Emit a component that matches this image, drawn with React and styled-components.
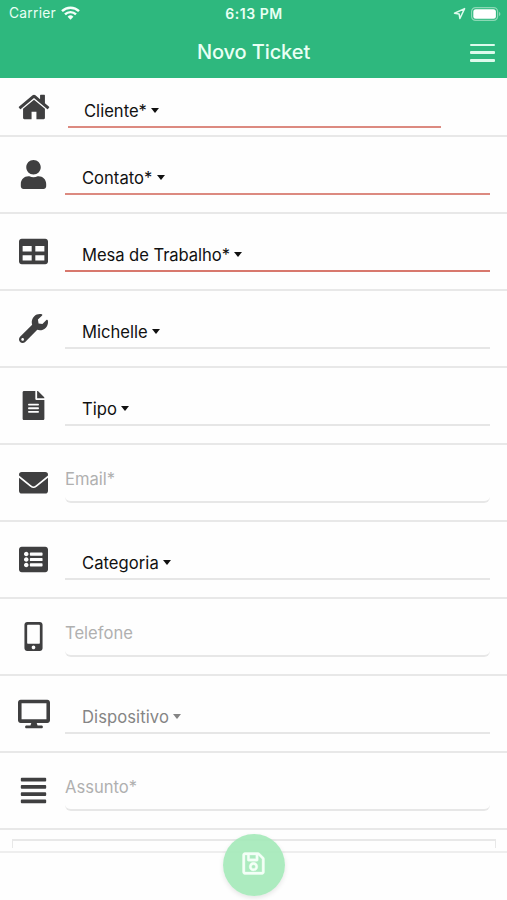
import React from 'react';
import styled, { createGlobalStyle } from 'styled-components';
import {
  FaUser, FaTable, FaWrench, FaFileAlt,
  FaListAlt, FaMobileAlt, FaDesktop, FaAlignJustify, FaRegSave,
} from 'react-icons/fa';

const GlobalStyle = createGlobalStyle`
  * { box-sizing: border-box; }
  body { margin: 0; background: #fefefe; }
`;

const Screen = styled.div`
  display: flex;
  flex-direction: column;
  width: 507px;
  height: 900px;
  overflow: hidden;
  background: #fefefe;
  font-family: Inter, "Liberation Sans", sans-serif;
  color: #111;
`;

const Header = styled.header`
  flex: none;
  height: 78px;
  background: #2eb87e;
  color: #e9fff4;
`;

const StatusBar = styled.div`
  display: grid;
  grid-template-columns: 1fr auto 1fr;
  align-items: center;
  height: 27px;
  padding: 0 6px 0 9px;
  font-size: 13.8px;
  line-height: 27px;
`;

const Carrier = styled.div`
  display: flex;
  align-items: center;
  gap: 5px;
  letter-spacing: 0.25px;
  svg { display: block; margin-top: -2px; }
`;

const Clock = styled.div`
  margin-left: -2px;
  font-size: 14px;
  font-weight: 600;
  letter-spacing: 0.55px;
`;

const Indicators = styled.div`
  display: flex;
  justify-content: flex-end;
  align-items: center;
  gap: 5px;
  svg { display: block; }
`;

const TitleBar = styled.div`
  display: grid;
  grid-template-columns: 1fr auto 1fr;
  align-items: center;
  height: 51px;
  padding: 0 12px;
`;

const Title = styled.h1`
  grid-column: 2;
  margin: 0;
  font-size: 20px;
  font-weight: 500;
  line-height: 51px;
  letter-spacing: -0.1px;
`;

const MenuButton = styled.button`
  justify-self: end;
  display: flex;
  flex-direction: column;
  justify-content: space-between;
  width: 25px;
  height: 18px;
  padding: 0;
  border: 0;
  background: none;
`;

const MenuLine = styled.span`
  height: 2.6px;
  border-radius: 1px;
  background: #ddfaec;
`;

const Form = styled.main`
  flex: none;
  height: 773px;
  overflow: hidden;
`;

const Row = styled.div`
  display: flex;
  height: ${(p) => (p.$compact ? 59 : 77)}px;
  border-bottom: 2px solid #e8e8e8;
`;

const IconCell = styled.div`
  display: flex;
  justify-content: center;
  align-items: center;
  flex: none;
  width: ${(p) => (p.$compact ? 67.5 : 65)}px;
  padding-right: ${(p) => (p.$compact ? 0.5 : 0)}px;
  padding-left: ${(p) => (p.$compact ? 0 : 2)}px;
  height: ${(p) => (p.$compact ? 58 : 75)}px;
  color: #3f3f40;
  svg { display: block; }
`;

const lineColors = { error: '#dc8a80', errorDark: '#d8786d', plain: '#e6e6e6' };

const Select = styled.div`
  display: flex;
  align-items: center;
  width: ${(p) => (p.$compact ? 373 : 425)}px;
  height: ${(p) => (p.$compact ? 50 : 58)}px;
  padding: ${(p) => (p.$compact ? '17px 0 0 16.5px' : '25px 0 0 17px')};
  border-bottom: 2px solid ${(p) => lineColors[p.$line]};
  font-size: 16.6px;
  line-height: 24px;
  letter-spacing: ${(p) => p.$track || 0}px;
  color: ${(p) => (p.$muted ? '#858585' : '#111')};
`;

const Caret = styled.span`
  margin-left: 4.5px;
  border: 4.5px solid transparent;
  border-top: 5px solid currentColor;
  border-bottom: 0;
`;

const TextField = styled.input`
  width: 425px;
  height: 58px;
  padding: 12px 0 0 0;
  border: 0;
  border-bottom: 2px solid #e7e7e7;
  border-radius: 0 0 6px 6px;
  outline: 0;
  background: none;
  font: 400 16.6px Inter, "Liberation Sans", sans-serif;
  &::placeholder { color: #b0b0b0; opacity: 1; }
`;

const TextArea = styled.div`
  height: 9px;
  margin: 9px 11px 0 12px;
  border: 2px solid #e8e8e8;
  border-width: 2px 1px 0;
`;

const Footer = styled.footer`
  display: flex;
  justify-content: center;
  flex: 1;
  border-top: 2px solid #eeeeee;
`;

const SaveButton = styled.button`
  display: flex;
  align-items: center;
  justify-content: center;
  width: 62px;
  height: 62px;
  margin-top: -19px;
  padding: 0 0 3px;
  border: 0;
  border-radius: 50%;
  background: rgba(163, 233, 184, 0.9);
  box-shadow: 0 2px 5px rgba(0, 0, 0, 0.1);
  color: #f4fff7;
  z-index: 1;
  svg { stroke: currentColor; stroke-width: 8px; }
`;

function HouseIcon({ size }) {
  return (
    <svg width={size} height={size} viewBox="0 0 1792 1792" fill="currentColor">
      <path d="M1472 992v480q0 26-19 45t-45 19h-384v-384h-256v384h-384q-26 0-45-19t-19-45v-480q0-1 .5-3t.5-3l575-474 575 474q1 2 1 6zm223-69l-62 74q-8 9-21 11h-3q-13 0-21-7l-692-577-692 577q-12 8-24 7-13-2-21-11l-62-74q-8-10-7-23.5t11-21.5l719-599q32-26 76-26t76 26l244 204v-195q0-14 9-23t23-9h192q14 0 23 9t9 23v408l219 182q10 8 11 21.5t-7 23.5z" />
    </svg>
  );
}

function MailIcon({ size }) {
  return (
    <svg width={size} height={size} viewBox="0 0 29 29">
      <rect x="0" y="4" width="29" height="21.5" rx="2.8" fill="currentColor" />
      <path d="M-.5 8.2 11.8 18.2Q14.5 20.3 17.2 18.2L29.5 8.2" fill="none" stroke="#fefefe" strokeWidth="1.7" />
    </svg>
  );
}

const ROWS = [
  { label: 'Cliente*', icon: HouseIcon, size: 34, compact: true, line: 'error' },
  { label: 'Contato*', icon: FaUser, size: 29, line: 'error' },
  { label: 'Mesa de Trabalho*', icon: FaTable, size: 29, line: 'errorDark', track: -0.06 },
  { label: 'Michelle', icon: FaWrench, size: 29, line: 'plain' },
  { label: 'Tipo', icon: FaFileAlt, size: 29, line: 'plain' },
  { label: 'Email*', icon: MailIcon, size: 29, input: true },
  { label: 'Categoria', icon: FaListAlt, size: 29, line: 'plain', track: 0.05 },
  { label: 'Telefone', icon: FaMobileAlt, size: 29, input: true },
  { label: 'Dispositivo', icon: FaDesktop, size: 32, line: 'plain', muted: true, track: 0.08 },
  { label: 'Assunto*', icon: FaAlignJustify, size: 29, input: true },
];

function FieldRow({ label, icon: Icon, size, compact, line, muted, input, track }) {
  return (
    <Row $compact={compact}>
      <IconCell $compact={compact}><Icon size={size} /></IconCell>
      {input ? (
        <TextField placeholder={label} />
      ) : (
        <Select $compact={compact} $line={line} $muted={muted} $track={track}>
          {label}<Caret />
        </Select>
      )}
    </Row>
  );
}

export default function App() {
  return (
    <Screen>
      <GlobalStyle />
      <Header>
        <StatusBar>
          <Carrier>
            Carrier
            <svg width="19" height="14" viewBox="0 0 19 14" fill="none" stroke="#f4fffa" strokeWidth="2.4">
              <path d="M1 5.2a12.2 12.2 0 0 1 17 0" />
              <path d="M4 8.4a7.8 7.8 0 0 1 11 0" />
              <path d="M6.6 10.8a4.1 4.1 0 0 1 5.8 0L9.5 13.7z" fill="#f4fffa" stroke="none" />
            </svg>
          </Carrier>
          <Clock>6:13 PM</Clock>
          <Indicators>
            <svg width="13" height="13" viewBox="0 0 13 13" fill="none" stroke="#dffbee" strokeWidth="1.5" strokeLinejoin="round">
              <path d="M11.6 1.6 1.5 6.2l4.6.7.8 4.6z" />
            </svg>
            <svg width="30" height="14" viewBox="0 0 30 14">
              <rect x="0.6" y="0.6" width="26" height="12.8" rx="4" fill="none" stroke="#8bd8b5" strokeWidth="1.2" />
              <rect x="2.3" y="2.3" width="22.6" height="9.4" rx="2.5" fill="#fff" />
              <path d="M28 5v4c1.8-.5 1.8-3.5 0-4z" fill="#8bd8b5" />
            </svg>
          </Indicators>
        </StatusBar>
        <TitleBar>
          <Title>Novo Ticket</Title>
          <MenuButton aria-label="Menu"><MenuLine /><MenuLine /><MenuLine /></MenuButton>
        </TitleBar>
      </Header>
      <Form>
        {ROWS.map((row) => <FieldRow key={row.label} {...row} />)}
        <TextArea />
      </Form>
      <Footer>
        <SaveButton aria-label="Salvar"><FaRegSave size={25} /></SaveButton>
      </Footer>
    </Screen>
  );
}
